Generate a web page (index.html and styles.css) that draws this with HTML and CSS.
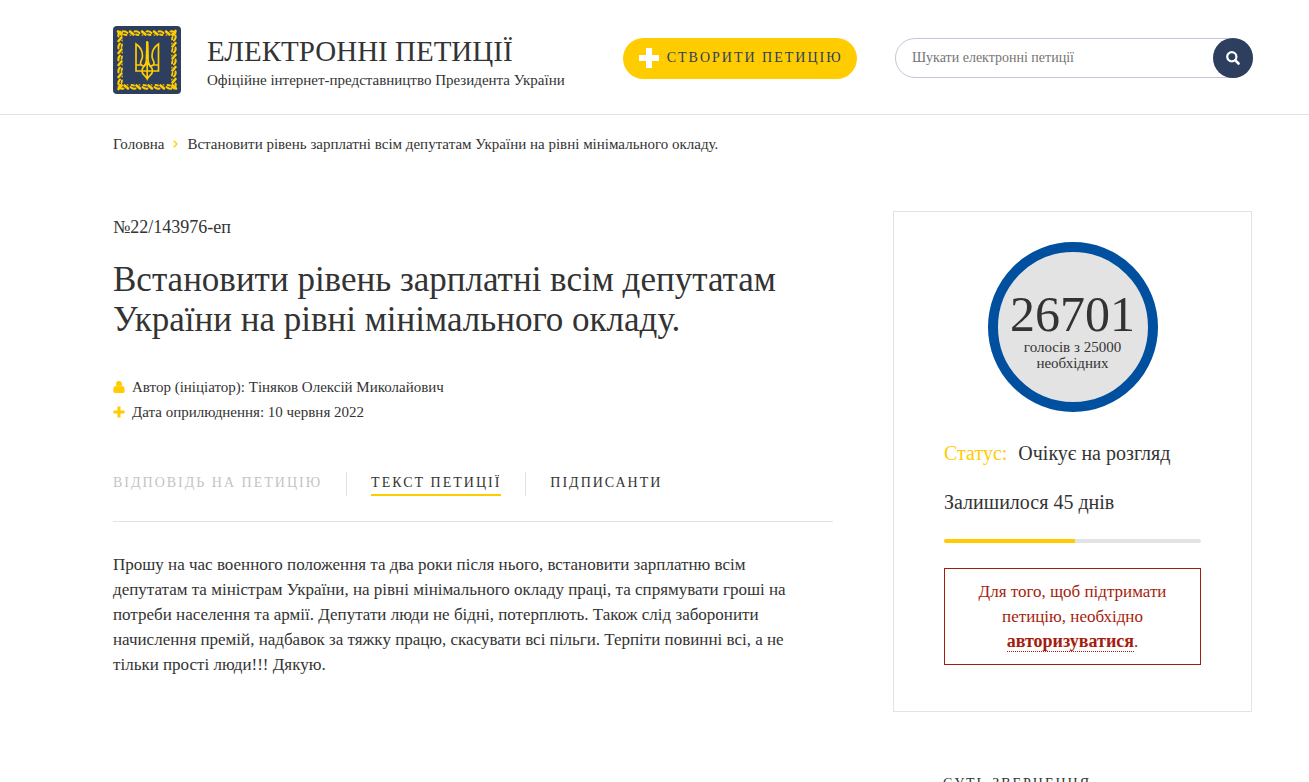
FILE: index.html
```html
<!DOCTYPE html>
<html lang="uk">
    <head>
        <meta charset="utf-8">
        <meta name="viewport" content="width=device-width, initial-scale=1">
        <title>Електронні петиції</title>
        <link rel="stylesheet" href="styles.css">
    </head>
    <body>
        <header class="header">
            <a class="logo" href="#" aria-label="Електронні петиції">
                <svg width="68" height="68" viewBox="0 0 68 68">
                    <defs>
                        <g id="leaf" fill="none" stroke="#fc0" stroke-linecap="round">
                            <path d="M1 1.500L4.500 4.500" stroke-width="2.600"/>
                            <path d="M5.500 1.500C7.500 1 9 1.500 10.500 3" stroke-width="2"/>
                            <path d="M7 4.500L9.500 5" stroke-width="1.800"/>
                            <path d="M1 5L1.800 5.200" stroke-width="1.200"/>
                        </g>
                        <g id="side">
                            <use href="#leaf" x="4"/>
                            <use href="#leaf" x="16"/>
                            <use href="#leaf" x="28"/>
                            <use href="#leaf" x="40"/>
                            <use href="#leaf" x="52"/>
                        </g>
                    </defs>
                    <rect width="68" height="68" rx="4" fill="#2d3e5f"/>
                    <use href="#side" y="4"/>
                    <use href="#side" y="4" transform="rotate(90 34 34)"/>
                    <use href="#side" y="4" transform="rotate(180 34 34)"/>
                    <use href="#side" y="4" transform="rotate(270 34 34)"/>
                    <g fill="none" stroke="#fc0" stroke-width="1.700">
                        <path d="M23 18V45H45.500V18C41 21 39 25 39 30C39 34 41 34 41 37C41 39 39 40 37 40C35 38 35 35 35 31L34.200 15L33.500 31C33.500 35 33.500 38 31.500 40C29 40 27.500 39 27.500 37C27.500 34 29.500 34 29.500 30C29.500 25 27.500 21 23 18Z"/>
                        <path d="M23 39H27.500M41 39H45.500M29 45C29 41 31.500 40 34.200 36C37 40 39.500 41 39.500 45C39.500 49 36 49 34.200 53C32.500 49 29 49 29 45ZM34.200 36V52"/>
                        <path d="M34.200 16V32" stroke-width="2.500"/>
                    </g>
                </svg>
            </a>
            <div class="brand">
                <div class="brand-title">ЕЛЕКТРОННІ ПЕТИЦІЇ</div>
                <div class="brand-sub">Офіційне інтернет-представництво Президента України</div>
            </div>
            <button class="create" type="button">
                <svg width="20" height="20" viewBox="0 0 20 20"><path d="M7 0h6v7h7v6h-7v7H7v-7H0V7h7z" fill="#fff"/></svg>
                <span>СТВОРИТИ ПЕТИЦІЮ</span>
            </button>
            <form class="search">
                <input type="search" placeholder="Шукати електронні петиції" aria-label="Шукати електронні петиції">
                <button type="button" aria-label="Шукати">
                    <svg width="14" height="14" viewBox="0 0 14 14" fill="none" stroke="#fff"><circle cx="5.800" cy="5.800" r="4.600" stroke-width="2.200"/><path d="M9.200 9.200L12.500 12.500" stroke-width="2.600" stroke-linecap="round"/></svg>
                </button>
            </form>
        </header>

        <nav class="crumbs">
            <a href="#">Головна</a>
            <svg width="5" height="8" viewBox="0 0 5 8"><path d="M.7.7L4 4L.7 7.300" fill="none" stroke="#fc0" stroke-width="1.300"/></svg>
            <span>Встановити рівень зарплатні всім депутатам України на рівні мінімального окладу.</span>
        </nav>

        <div class="page">
            <main class="petition">
                <div class="number">№22/143976-еп</div>
                <h1>Встановити рівень зарплатні всім депутатам України на рівні мінімального окладу.</h1>
                <ul class="meta">
                    <li>
                        <svg width="12" height="12" viewBox="0 0 12 12" fill="#fc0"><circle cx="6" cy="3" r="3"/><path d="M3 4.800C1 4.800.300 7 .300 9.800C.300 11.200 1 12 2.200 12H9.800C11 12 11.700 11.200 11.700 9.800C11.700 7 11 4.800 9 4.800C7.500 6.600 4.500 6.600 3 4.800Z"/></svg>
                        <span>Автор (ініціатор): Тіняков Олексій Миколайович</span>
                    </li>
                    <li>
                        <svg width="12" height="12" viewBox="0 0 12 12" fill="#fc0"><path d="M4.500.500h3v4h4v3h-4v4h-3v-4h-4v-3h4z"/></svg>
                        <span>Дата оприлюднення: 10 червня 2022</span>
                    </li>
                </ul>
                <div class="tabs">
                    <button type="button" disabled>ВІДПОВІДЬ НА ПЕТИЦІЮ</button>
                    <button type="button" class="active">ТЕКСТ ПЕТИЦІЇ</button>
                    <button type="button">ПІДПИСАНТИ</button>
                </div>
                <p class="text">Прошу на час военного положення та два роки після нього, встановити зарплатню всім депутатам та міністрам України, на рівні мінімального окладу праці, та спрямувати гроші на потреби населення та армії. Депутати люди не бідні, потерплють. Також слід заборонити начислення премій, надбавок за тяжку працю, скасувати всі пільги. Терпіти повинні всі, а не тільки прості люди!!! Дякую.</p>
            </main>

            <aside>
                <div class="card">
                    <div class="votes">
                        <div class="votes-count">26701</div>
                        <div class="votes-label">голосів з 25000 необхідних</div>
                    </div>
                    <div class="status"><span>Статус:</span> Очікує на розгляд</div>
                    <div class="left-days">Залишилося 45 днів</div>
                    <div class="progress"><div class="progress-bar" style="width: 51%"></div></div>
                    <div class="notice">Для того, щоб підтримати петицію, необхідно <a href="#">авторизуватися</a>.</div>
                </div>
                <h2>СУТЬ ЗВЕРНЕННЯ</h2>
            </aside>
        </div>
    </body>
</html>
```
FILE: styles.css
```css
*
{
    box-sizing: border-box;
}

body
{
    margin: 0;
    background-color: #fff;
    color: #333;
    font-family: Georgia, "Liberation Serif", serif;
    font-size: 15px;
    line-height: 20px;
}

a
{
    color: inherit;
    text-decoration: none;
}

button, input
{
    font-family: inherit;
    color: inherit;
}

svg
{
    display: block;
    flex: none;
}

.header
{
    display: flex;
    align-items: center;
    padding: 26px 56px 20px 113px;
    border-bottom: 1px solid #e3e3e3;
}

.brand
{
    margin: 0 58px 0 26px;
    padding-top: 3px;
    white-space: nowrap;
}

.brand-title
{
    font-size: 29px;
    line-height: 36px;
}

.brand-sub
{
    line-height: 22px;
}

.create
{
    display: flex;
    align-items: center;
    gap: 8px;
    height: 41px;
    padding: 0 14px 0 16px;
    margin-bottom: 4px;
    border: 0;
    border-radius: 21px;
    background-color: #fc0;
    color: #2d3e5f;
    font-size: 14px;
    letter-spacing: 2px;
    white-space: nowrap;
}

.search
{
    display: flex;
    flex: 1;
    max-width: 358px;
    height: 40px;
    margin: 0 0 4px auto;
    border: 1px solid #c9c3d9;
    border-radius: 20px;
}

.search input
{
    flex: 1;
    min-width: 0;
    padding: 0 16px;
    border: 0;
    outline: 0;
    background: none;
    font-size: 14px;
}

.search input::placeholder
{
    color: #757575;
}

.search button
{
    display: flex;
    align-items: center;
    justify-content: center;
    width: 40px;
    height: 40px;
    margin: -1px -1px 0 0;
    padding: 0;
    border: 0;
    border-radius: 50%;
    background-color: #2d3e5f;
}

.crumbs
{
    display: flex;
    align-items: center;
    gap: 9px;
    padding: 19px 57px 0 113px;
}

.page
{
    display: grid;
    grid-template-columns: 1fr 359px;
    gap: 60px;
    padding: 57px 57px 0 113px;
}

.number
{
    margin-top: 6px;
    font-size: 18px;
}

h1
{
    margin: 23px 0 0;
    font-size: 35px;
    font-weight: normal;
    line-height: 40px;
}

.meta
{
    margin: 34px 0 0;
    padding: 0;
    list-style: none;
}

.meta li
{
    display: flex;
    align-items: center;
    gap: 7px;
    height: 25px;
}

.tabs
{
    display: flex;
    padding: 48px 0 25px;
    border-bottom: 1px solid #e3e3e3;
}

.tabs button
{
    position: relative;
    height: 24px;
    padding: 0;
    border: 0;
    border-bottom: 2px solid transparent;
    background: none;
    font-size: 14px;
    line-height: 20px;
    letter-spacing: 2px;
    white-space: nowrap;
}

.tabs button + button
{
    margin-left: 49px;
}

.tabs button + button::before
{
    content: "";
    position: absolute;
    top: 0;
    left: -25px;
    height: 24px;
    border-left: 1px solid #e3e3e3;
}

.tabs button:disabled
{
    color: #c4c4c4;
}

.tabs .active
{
    border-bottom-color: #fc0;
}

.text
{
    margin: 30px 0 0;
    padding-right: 20px;
    font-size: 17px;
    line-height: 25px;
}

.card
{
    padding: 30px 50px 46px;
    border: 1px solid #e3e3e3;
}

.votes
{
    width: 170px;
    height: 170px;
    margin: 0 auto;
    padding: 37px 10px 0;
    border: 10px solid #00509f;
    border-radius: 50%;
    background-color: #e3e3e3;
    text-align: center;
}

.votes-count
{
    font-size: 50px;
    line-height: 50px;
}

.votes-label
{
    line-height: 16px;
}

.status
{
    margin-top: 29px;
    font-size: 20px;
    line-height: 25px;
}

.status span
{
    margin-right: 6px;
    color: #fc0;
}

.left-days
{
    margin-top: 24px;
    font-size: 20px;
    line-height: 25px;
}

.progress
{
    height: 4px;
    margin-top: 24px;
    border-radius: 2px;
    background-color: #e3e3e3;
    overflow: hidden;
}

.progress-bar
{
    height: 4px;
    background-color: #fc0;
}

.notice
{
    margin-top: 25px;
    padding: 10px 24px;
    border: 1px solid #a51c0e;
    color: #a51c0e;
    font-size: 17px;
    line-height: 25px;
    text-align: center;
}

.notice a
{
    border-bottom: 1px dotted #a51c0e;
    font-size: 18px;
    font-weight: bold;
}

h2
{
    margin: 62px 0 0 50px;
    font-size: 14px;
    font-weight: normal;
    line-height: 20px;
    letter-spacing: 2px;
}
```
